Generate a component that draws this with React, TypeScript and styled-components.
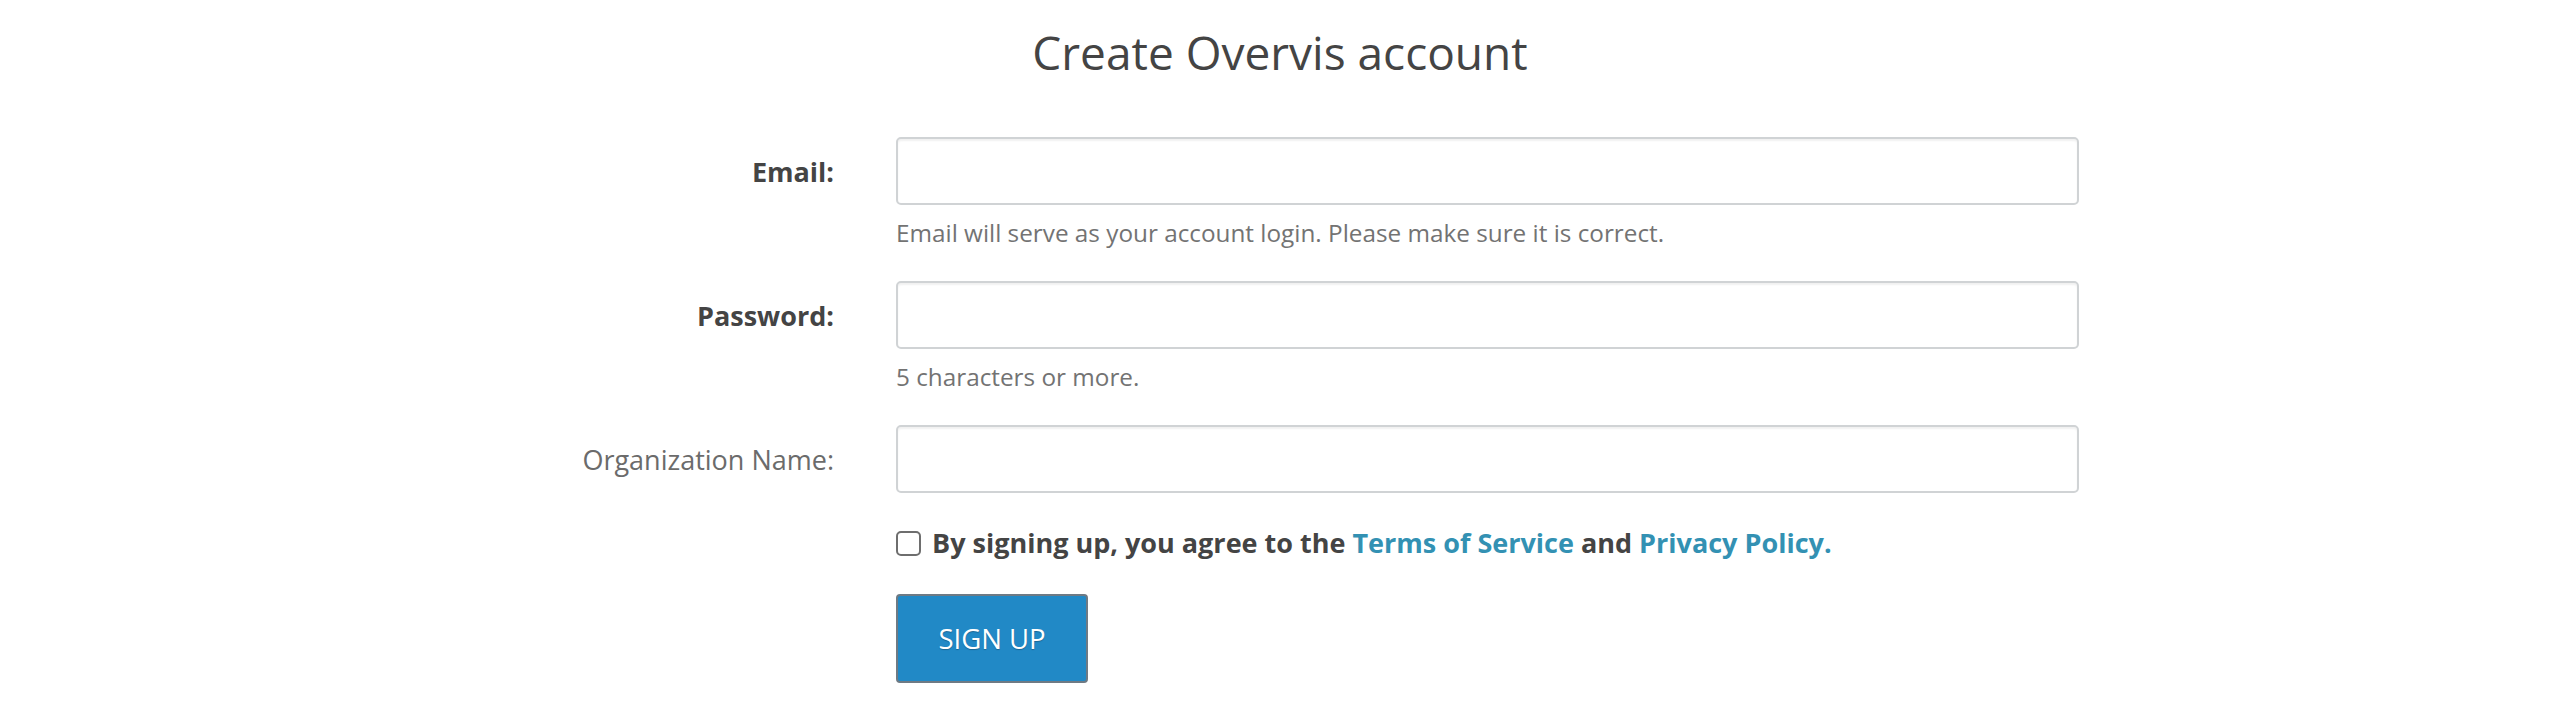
import styled, { createGlobalStyle } from "styled-components";

const GlobalStyle = createGlobalStyle`
  html, body {
    margin: 0;
    padding: 0;
    background: #ffffff;
    font-family: "Open Sans", "Noto Sans", sans-serif;
    color: #444444;
  }
`;

interface FieldProps {
  label: string;
  strong?: boolean;
  type?: string;
  help?: string;
}

function Field({ label, strong, type = "text", help }: FieldProps) {
  return (
    <FieldRow>
      <Label $strong={strong}>{label}</Label>
      <Control>
        <Input type={type} />
        {help && <Help>{help}</Help>}
      </Control>
    </FieldRow>
  );
}

function App() {
  return (
    <>
      <GlobalStyle />
      <Page>
        <Title>Create Overvis account</Title>
        <Form onSubmit={(e) => e.preventDefault()}>
          <Field
            label="Email:"
            strong
            type="email"
            help="Email will serve as your account login. Please make sure it is correct."
          />
          <Field
            label="Password:"
            strong
            type="password"
            help="5 characters or more."
          />
          <Field label="Organization Name:" />
          <FieldRow>
            <span />
            <Control>
              <AgreeLine>
                <Checkbox type="checkbox" />
                <span>
                  By signing up, you agree to the{" "}
                  <Link href="#">Terms of Service</Link> and{" "}
                  <Link href="#">Privacy Policy.</Link>
                </span>
              </AgreeLine>
              <SubmitButton type="submit">SIGN UP</SubmitButton>
            </Control>
          </FieldRow>
        </Form>
      </Page>
    </>
  );
}

const Page = styled.div`
  width: 100%;
  display: flex;
  flex-direction: column;
  align-items: center;
`;

const Title = styled.h1`
  margin: 20px 0 0;
  font-size: 46px;
  font-weight: 400;
  line-height: 64px;
  color: #444444;
  text-align: center;
`;

const Form = styled.form`
  margin-top: 53px;
  display: flex;
  flex-direction: column;
`;

const FieldRow = styled.div`
  display: grid;
  grid-template-columns: 353px 1183px;
  column-gap: 62px;
  margin-bottom: 32px;
`;

const Label = styled.label<{ $strong?: boolean }>`
  height: 68px;
  display: flex;
  align-items: center;
  justify-content: flex-end;
  font-size: 27px;
  font-weight: ${({ $strong }) => ($strong ? 700 : 400)};
  color: ${({ $strong }) => ($strong ? "#444444" : "#6b6b6b")};
`;

const Control = styled.div`
  display: flex;
  flex-direction: column;
  align-items: flex-start;
`;

const Input = styled.input`
  box-sizing: border-box;
  width: 100%;
  height: 68px;
  border: 2px solid #d0d3d5;
  border-radius: 5px;
  box-shadow: inset 0 2px 2px rgba(0, 0, 0, 0.06);
  background: #ffffff;
  padding: 0 18px;
  font-family: inherit;
  font-size: 25px;
  outline: none;
`;

const Help = styled.div`
  margin-top: 12px;
  font-size: 24.3px;
  line-height: 32px;
  color: #737373;
`;

const AgreeLine = styled.label`
  display: flex;
  align-items: center;
  gap: 11px;
  font-size: 27px;
  line-height: 36px;
  font-weight: 700;
  color: #444444;
`;

const Checkbox = styled.input`
  appearance: none;
  box-sizing: border-box;
  width: 25px;
  height: 25px;
  margin: 0;
  border: 2px solid #6e6e6e;
  border-radius: 5px;
  background: #ffffff;
`;

const Link = styled.a`
  color: #3391b3;
  text-decoration: none;
`;

const SubmitButton = styled.button`
  margin-top: 33px;
  width: 192px;
  height: 89px;
  box-sizing: border-box;
  background: #2189c6;
  border: 2px solid #6e7a84;
  border-radius: 4px;
  color: #ffffff;
  font-family: inherit;
  font-size: 27.5px;
  font-weight: 400;
  text-shadow: 0 1px 1px rgba(0, 0, 0, 0.25);
  cursor: pointer;
`;

export default App;
